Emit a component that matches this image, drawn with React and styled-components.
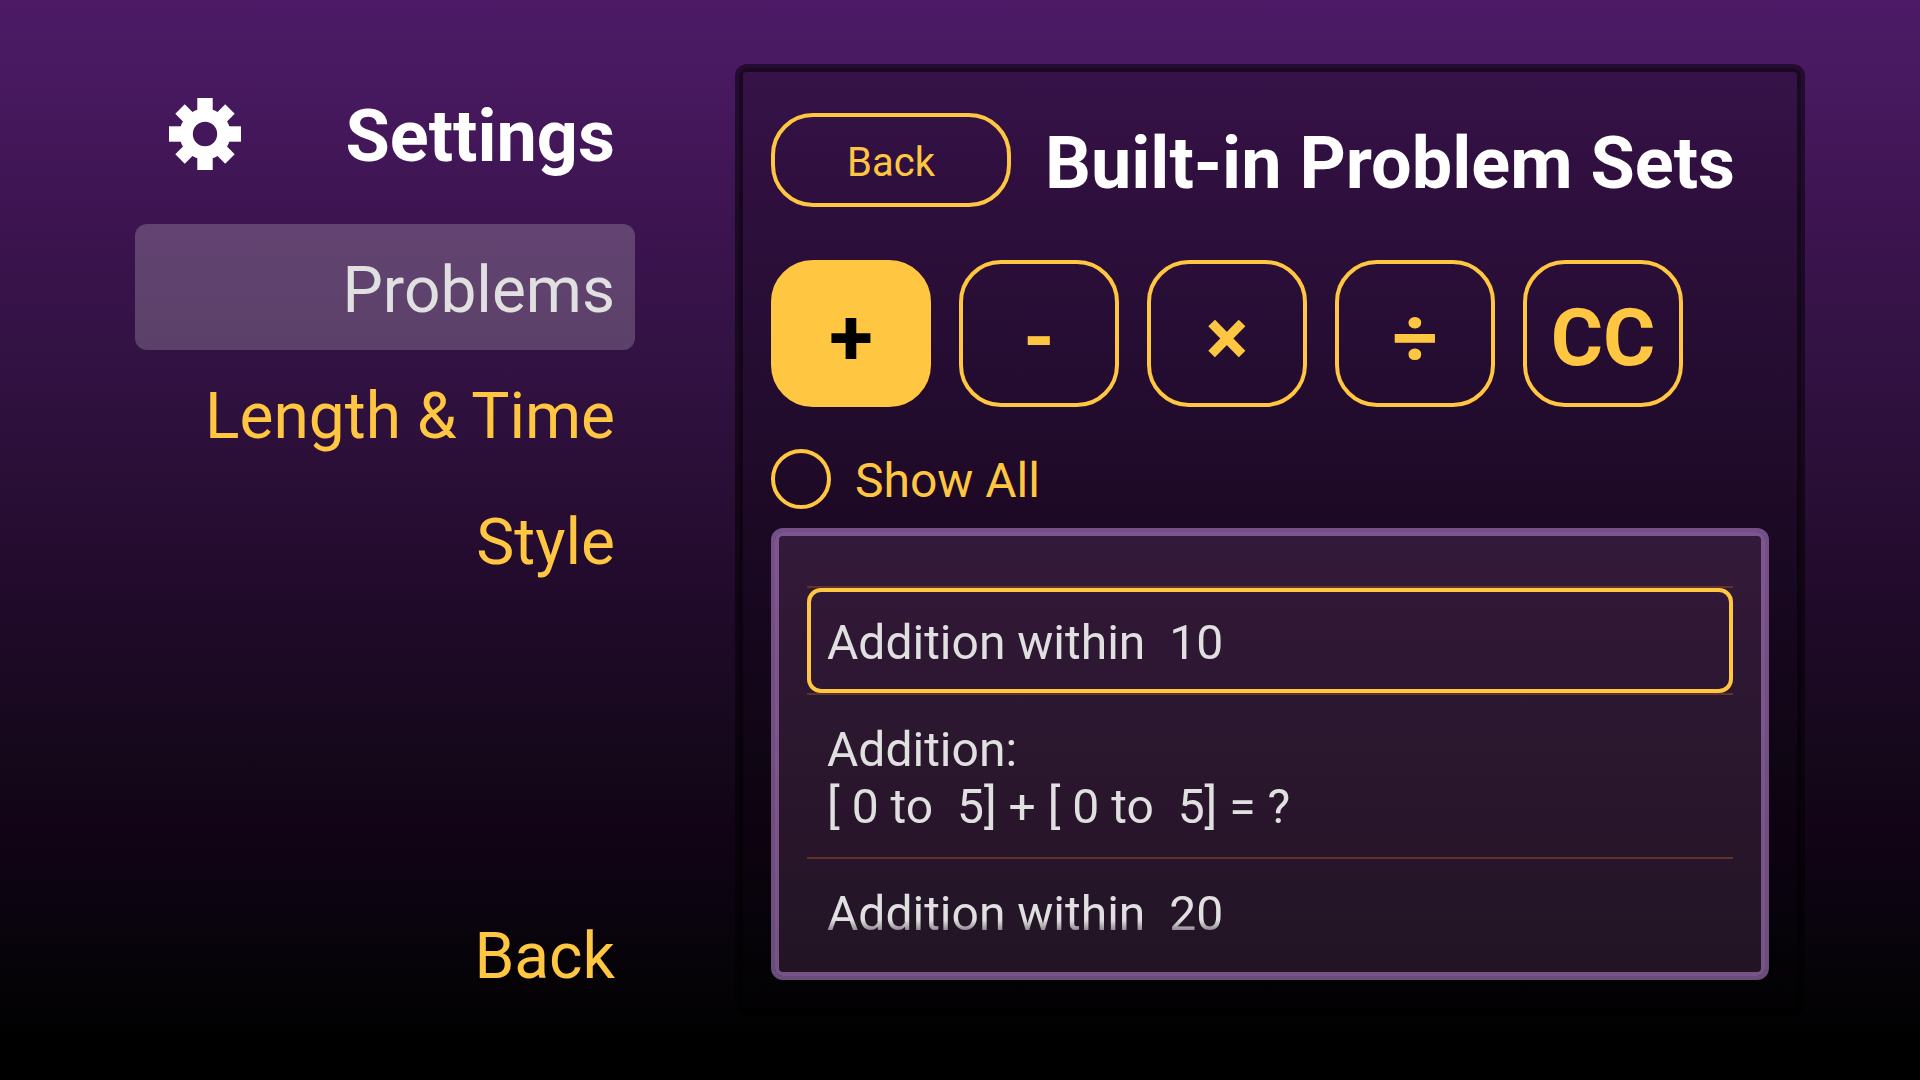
import React, { useState } from "react";
import styled, { createGlobalStyle, css } from "styled-components";

const GOLD = "#ffc641";
const LIGHT = "#e0e0e0";

const GlobalStyle = createGlobalStyle`
  *, *::before, *::after { box-sizing: border-box; }
  body {
    margin: 0;
    background: #000;
    color: ${GOLD};
    font-family: Roboto, "Noto Sans", sans-serif;
  }
  h1, h2, ul { margin: 0; padding: 0; }
  ul { list-style: none; }
  button { font-family: inherit; color: inherit; background: none; border: 0; cursor: pointer; }
`;

const Page = styled.div`
  display: flex;
  gap: 100px;
  height: 100vh;
  min-height: 720px;
  padding: 64px 115px 64px 135px;
  background: linear-gradient(
    #4c1a66 0%,
    #481960 7%,
    #3d1450 20%,
    #321243 33%,
    #290e35 45%,
    #200a2a 56%,
    #1c0924 62%,
    #15081b 70%,
    #120416 77%,
    #0b0410 84%,
    #050306 91%,
    #010001 96%,
    #000 100%
  );
`;

const Sidebar = styled.nav`
  display: flex;
  flex-direction: column;
  flex: 0 0 500px;
`;

const SidebarHeader = styled.header`
  display: flex;
  align-items: center;
  justify-content: space-between;
  height: 140px;
  margin-bottom: 20px;
  padding: 0 20px 0 34px;
`;

const Heading = styled.h1`
  padding-top: 6px;
  color: #fff;
  font-size: 72px;
  line-height: 84px;
  font-weight: 700;
  white-space: nowrap;
`;

const Gear = styled.svg`
  width: 72px;
  height: 72px;
  fill: #fff;
`;

const NavItem = styled.button`
  height: 126px;
  padding: 8px 20px 0;
  border-radius: 12px;
  font-size: 64px;
  line-height: 76px;
  text-align: right;
  ${(p) =>
    p.$active &&
    css`
      background: rgba(255, 255, 255, 0.2);
      color: ${LIGHT};
    `}
`;

const Spacer = styled.div`
  flex: 1;
`;

const Panel = styled.main`
  display: flex;
  flex: 1;
  flex-direction: column;
  min-width: 0;
  padding: 45px 32px 32px;
  border: 4px solid rgba(0, 0, 0, 0.5);
  border-radius: 12px;
  background: rgba(0, 0, 0, 0.25);
  background-clip: padding-box;
  box-shadow: inset 0 0 0 4px rgba(0, 0, 0, 0.5);
`;

const PanelHeader = styled.header`
  display: flex;
  align-items: center;
  gap: 34px;
  margin-bottom: 53px;
`;

const Title = styled(Heading).attrs({ as: "h2" })`
  padding-top: 8px;
`;

const outlined = css`
  border: 4px solid ${GOLD};
  border-radius: 42px;
`;

const BackButton = styled.button`
  ${outlined}
  width: 240px;
  height: 94px;
  padding: 6px 0 0;
  font-size: 40px;
  line-height: 48px;
`;

const Operators = styled.div`
  display: flex;
  gap: 28px;
  margin-bottom: 42px;
`;

const Operator = styled.button`
  ${outlined}
  width: 160px;
  height: 147px;
  padding: 8px 0 0;
  font-size: 80px;
  line-height: 94px;
  font-weight: 700;
  ${(p) =>
    p.$active &&
    css`
      background: ${GOLD};
      color: #000;
    `}
`;

const Toggle = styled.label`
  display: flex;
  align-items: center;
  align-self: flex-start;
  gap: 24px;
  margin-bottom: 19px;
  font-size: 48px;
  line-height: 56px;
  cursor: pointer;
`;

const ToggleInput = styled.input`
  appearance: none;
  width: 60px;
  height: 60px;
  margin: 0;
  border: 4px solid ${GOLD};
  border-radius: 50%;
  &:checked {
    background: ${GOLD};
  }
`;

const ToggleText = styled.span`
  height: 60px;
  padding-top: 4px;
`;

const ListFrame = styled.section`
  display: flex;
  flex: 1;
  min-height: 0;
  padding: 32px;
  border: 4px solid rgba(176, 128, 202, 0.6);
  border-radius: 12px;
  background: rgba(124, 76, 122, 0.25);
  background-clip: padding-box;
  box-shadow: inset 0 0 0 4px rgba(176, 128, 202, 0.6);
`;

const ProblemList = styled.ul`
  flex: 1;
  min-width: 0;
  overflow: hidden;
  padding: 22px 0;
  mask-image: linear-gradient(transparent, #000 22px, #000 calc(100% - 24px), transparent);
`;

const ProblemRow = styled.li`
  border-bottom: 2px solid #5f3428;
  &:first-child {
    border-top: 2px solid #5f3428;
  }
`;

const ProblemButton = styled.button`
  display: block;
  width: 100%;
  padding: 22px 16px 18px;
  border: 4px solid ${(p) => (p.$active ? GOLD : "transparent")};
  border-radius: 14px;
  color: ${LIGHT};
  font-size: 48px;
  line-height: 57px;
  text-align: left;
  white-space: pre;
`;

const SECTIONS = ["Problems", "Length & Time", "Style"];

const OPERATORS = [
  { symbol: "+", name: "Addition" },
  { symbol: "-", name: "Subtraction" },
  { symbol: "×", name: "Multiplication" },
  { symbol: "÷", name: "Division" },
  { symbol: "CC", name: "CC" },
];

const PROBLEMS = [
  "Addition within  10",
  "Addition:\n[ 0 to  5] + [ 0 to  5] = ?",
  "Addition within  20",
];

function GearIcon() {
  return (
    <Gear viewBox="-36 -36 72 72" aria-hidden="true">
      <path
        fillRule="evenodd"
        d="M0-25.500A25.500 25.500 0 0 1 0 25.500A25.500 25.500 0 0 1 0-25.500ZM0-12.200A12.200 12.200 0 0 0 0 12.200A12.200 12.200 0 0 0 0-12.200Z"
      />
      {[0, 90, 180, 270].map((a) => (
        <g key={a} transform={`rotate(${a})`}>
          <rect x="-7.700" y="-36" width="15.400" height="14" />
          <rect x="-6.700" y="-35.300" width="13.400" height="14" transform="rotate(45)" />
        </g>
      ))}
    </Gear>
  );
}

export default function App() {
  const [section, setSection] = useState(SECTIONS[0]);
  const [operator, setOperator] = useState("+");
  const [problem, setProblem] = useState(0);

  return (
    <>
      <GlobalStyle />
      <Page>
        <Sidebar>
          <SidebarHeader>
            <GearIcon />
            <Heading>Settings</Heading>
          </SidebarHeader>
          {SECTIONS.map((name) => (
            <NavItem key={name} $active={name === section} onClick={() => setSection(name)}>
              {name}
            </NavItem>
          ))}
          <Spacer />
          <NavItem>Back</NavItem>
        </Sidebar>
        <Panel>
          <PanelHeader>
            <BackButton>Back</BackButton>
            <Title>Built-in Problem Sets</Title>
          </PanelHeader>
          <Operators>
            {OPERATORS.map(({ symbol, name }) => (
              <Operator
                key={symbol}
                aria-label={name}
                aria-pressed={symbol === operator}
                $active={symbol === operator}
                onClick={() => setOperator(symbol)}
              >
                {symbol}
              </Operator>
            ))}
          </Operators>
          <Toggle htmlFor="show-all">
            <ToggleInput id="show-all" type="checkbox" />
            <ToggleText>Show All</ToggleText>
          </Toggle>
          <ListFrame>
            <ProblemList>
              {PROBLEMS.map((text, i) => (
                <ProblemRow key={text}>
                  <ProblemButton $active={i === problem} onClick={() => setProblem(i)}>
                    {text}
                  </ProblemButton>
                </ProblemRow>
              ))}
            </ProblemList>
          </ListFrame>
        </Panel>
      </Page>
    </>
  );
}
